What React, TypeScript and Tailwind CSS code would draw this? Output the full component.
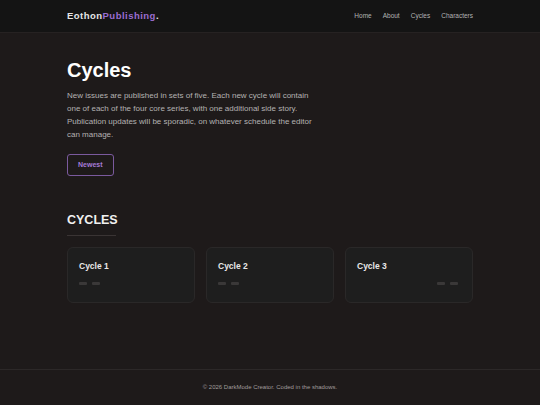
const cycles = [
  { id: 1, title: 'Cycle 1', align: 'start' },
  { id: 2, title: 'Cycle 2', align: 'start' },
  { id: 3, title: 'Cycle 3', align: 'end' },
];

function Header() {
  return (
    <header className="h-[33px] bg-[#141414] border-b border-[#262222]">
      <div className="w-[406px] mx-auto h-full flex items-center justify-between">
        <div className="text-[9.5px] font-bold tracking-[0.05em] text-[#e6e6e6]">
          Eothon<span className="text-[#9a6dd0]">Publishing</span>.
        </div>
        <nav className="flex gap-[11px] text-[6.5px] text-[#b3b3b3]">
          <span>Home</span>
          <span>About</span>
          <span>Cycles</span>
          <span>Characters</span>
        </nav>
      </div>
    </header>
  );
}

function CycleCard({ title, align }: { title: string; align: string }) {
  return (
    <div className="h-[56px] rounded-[6px] bg-[#1e1e1e] border border-[#2a2828] px-[11px] pt-[14px]">
      <h3 className="text-[8.5px] font-bold text-[#e8e8e8] leading-none">{title}</h3>
      <div className={`flex gap-[5px] mt-[12px] ${align === 'end' ? 'justify-end mr-[3px]' : 'justify-start'}`}>
        <span className="w-[8px] h-[3px] rounded-[1px] bg-[#3a3838]" />
        <span className="w-[8px] h-[3px] rounded-[1px] bg-[#3a3838]" />
      </div>
    </div>
  );
}

export default function App() {
  return (
    <div className="min-h-[405px] bg-[#1e1a1a] flex flex-col font-['Liberation_Sans',Arial,sans-serif]">
      <Header />
      <main className="flex-1">
        <div className="w-[406px] mx-auto pt-[27px]">
          <h1 className="text-[20px] font-bold text-white leading-[20px]">Cycles</h1>
          <p className="mt-[9px] w-[252px] text-[8px] leading-[13px] text-[#b4b2b2]">
            New issues are published in sets of five. Each new cycle will contain one of each of the four core series, with one additional side story. Publication updates will be sporadic, on whatever schedule the editor can manage.
          </p>
          <button className="mt-[13px] h-[22px] px-[10px] rounded-[3px] border border-[#7b5a9e] text-[7px] font-bold text-[#a57ad6]">
            Newest
          </button>

          <h2 className="mt-[38px] text-[12.5px] font-bold text-[#f0f0f0] leading-none">CYCLES</h2>
          <div className="mt-[8px] w-[49px] h-px bg-[#3a3434]" />

          <div className="mt-[11px] grid grid-cols-3 gap-[11px]">
            {cycles.map(c => (
              <CycleCard key={c.id} title={c.title} align={c.align} />
            ))}
          </div>
        </div>
      </main>
      <footer className="h-[36px] border-t border-[#2c2828] flex items-center justify-center text-[6px] text-[#a09c9c]">
        © 2026 DarkMode Creator. Coded in the shadows.
      </footer>
    </div>
  );
}
